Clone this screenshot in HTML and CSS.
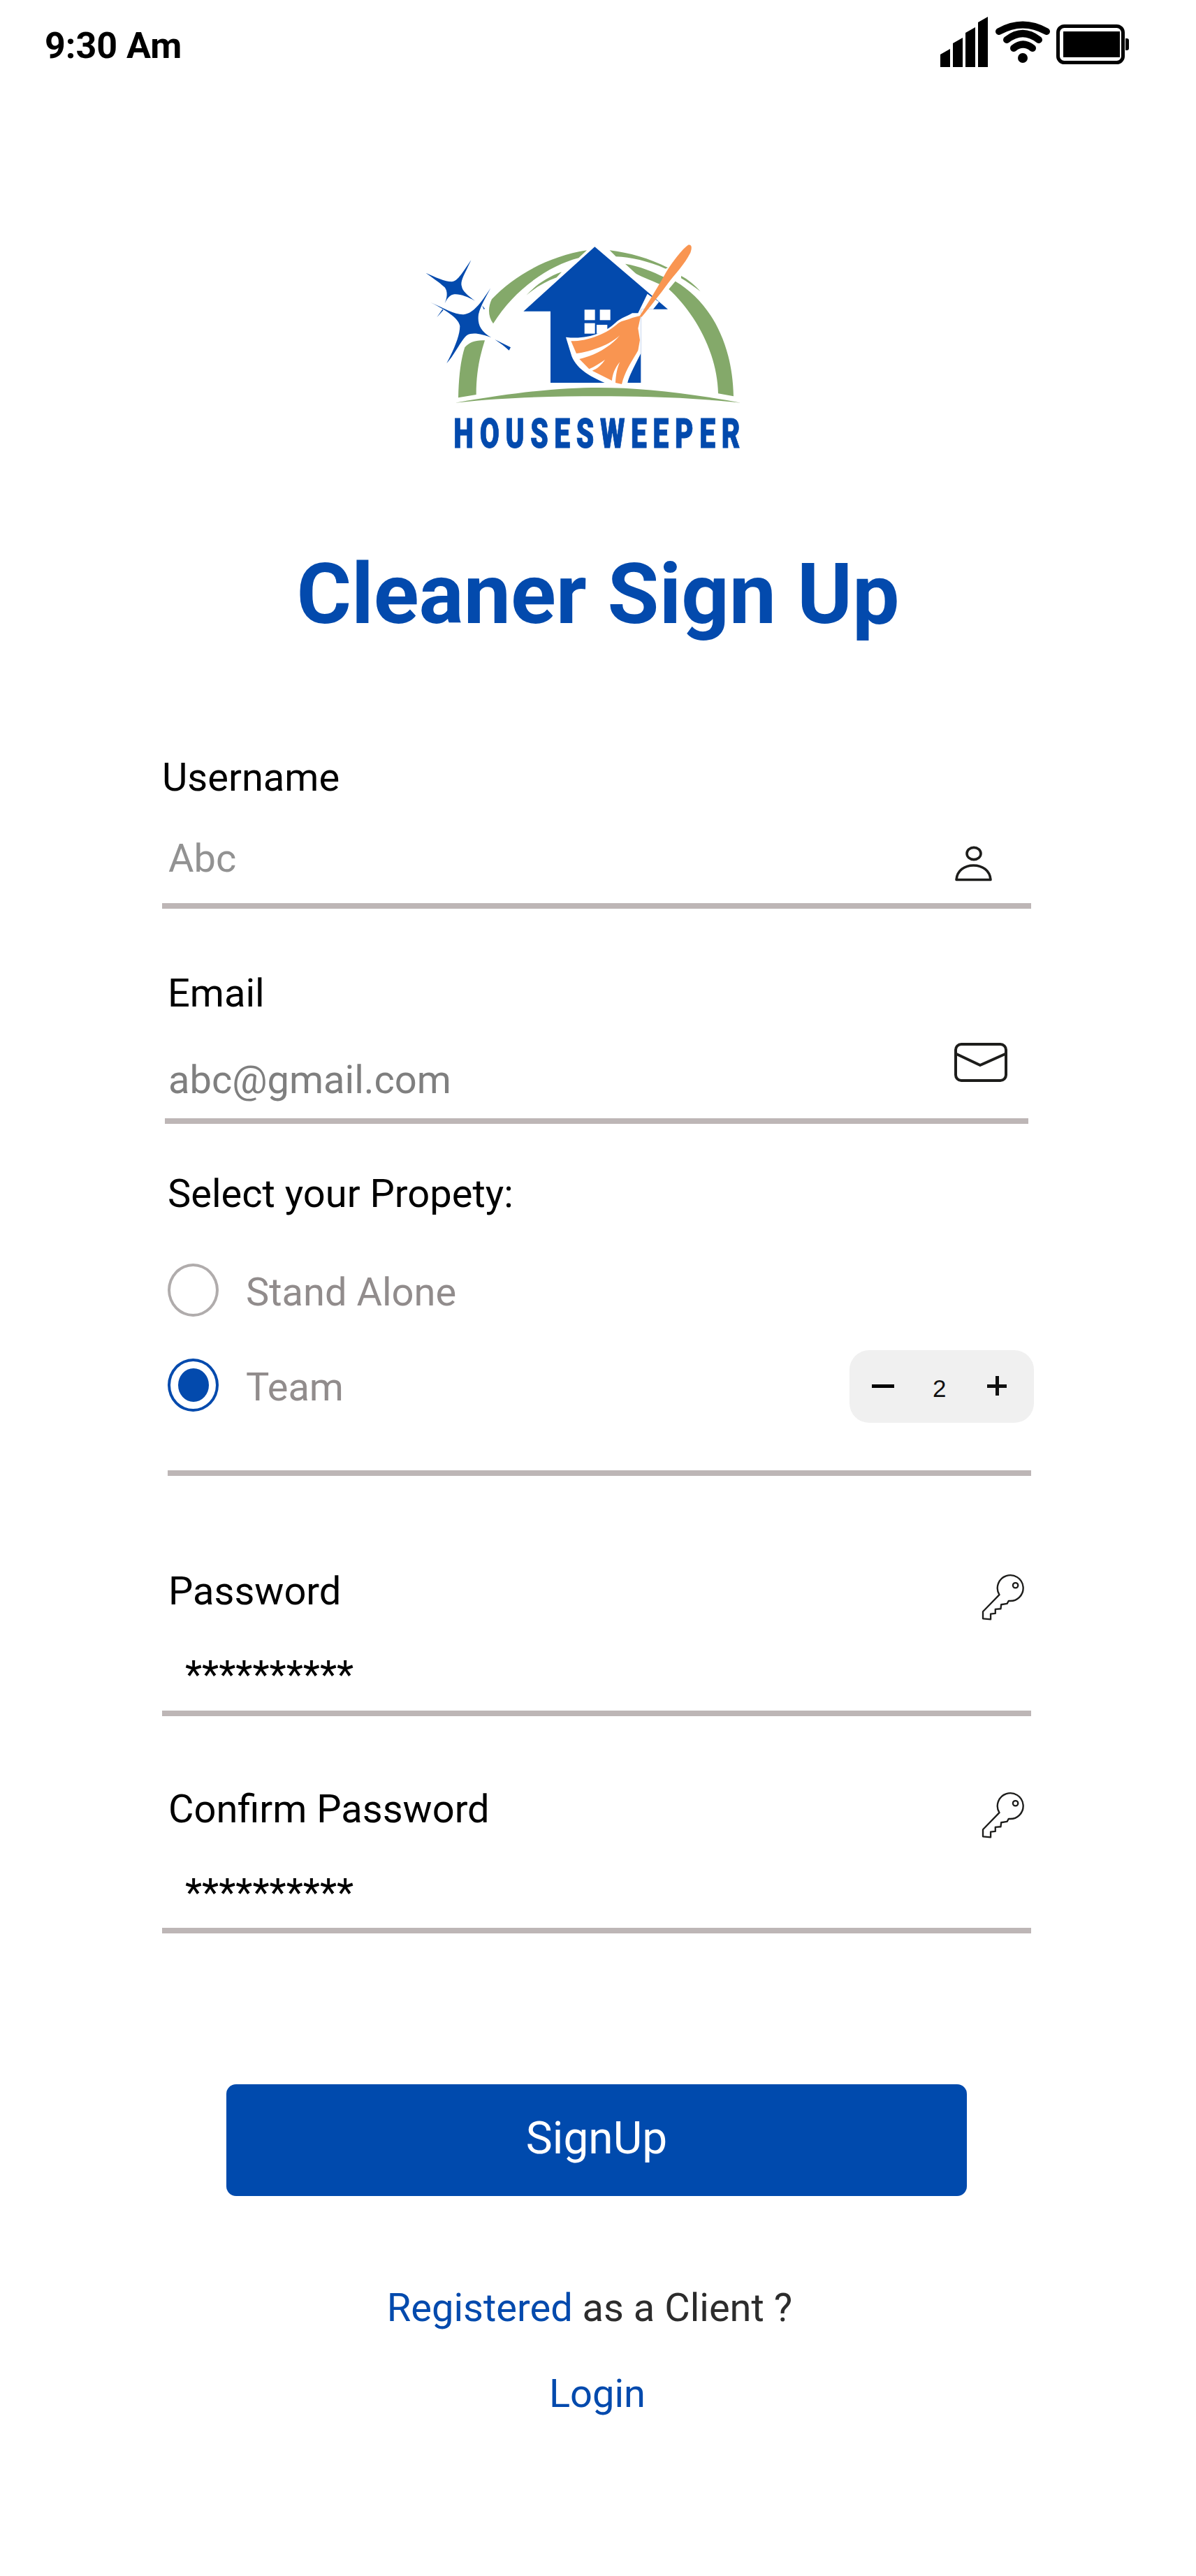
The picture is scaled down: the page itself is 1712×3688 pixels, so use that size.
FILE: index.html
```html
<!DOCTYPE html>
<html lang="en">
<head>
<meta charset="utf-8">
<title>Cleaner Sign Up</title>
<link rel="stylesheet" href="styles.css">
</head>
<body>
<div class="page">
  <header class="status">
    <span class="status-time">9:30 Am</span>
    <div class="status-icons">
      <svg class="ic-signal" viewBox="0 0 68 72"><path d="M0 72V54L14 46V72ZM18 72V38L32 30V72ZM36 72V23L50 15V72ZM54 72V8L68 0V72Z"/></svg>
      <svg class="ic-wifi" viewBox="0 0 80 72"><g fill="none" stroke="#000" stroke-width="10" stroke-linecap="round"><path d="M6 21Q40 2 74 21"/><path d="M17 33Q40 15 63 33"/><path d="M27 45Q40.5 34 54 45"/></g><circle cx="40" cy="59" r="7"/></svg>
      <svg class="ic-battery" viewBox="0 0 104 72"><rect x="2.5" y="13.5" width="93" height="52" rx="9" fill="none" stroke="#000" stroke-width="5"/><rect x="10" y="21" width="81" height="37"/><path d="M99 31h2a3 3 0 0 1 3 3v11a3 3 0 0 1-3 3h-2z"/></svg>
    </div>
  </header>

  <svg class="logo" viewBox="0 0 1560 1020">
    <g fill="#84A96A">
      <path d="M228 748C230 650 240 580 256 532C275 510 300 500 342 502C320 570 305 640 305 735Z"/>
      <path d="M372 325C470 220 620 140 780 115L745 148C620 180 470 280 378 430C355 400 355 360 372 325Z"/>
      <path d="M520 308C560 265 610 230 672 208L650 232C600 250 560 275 520 308Z"/>
      <path d="M878 115C960 125 1050 150 1128 190L1118 194C1040 160 970 145 905 142Z"/>
      <path d="M945 173C1010 185 1060 205 1115 232L1095 262C1050 240 1000 225 985 210Z"/>
      <path d="M1185 225C1215 240 1245 265 1268 292C1240 270 1210 250 1185 235Z"/>
      <path d="M1160 248C1300 330 1405 500 1410 742L1344 730C1340 550 1240 380 1132 282Z"/>
      <path d="M215 770C500 720 680 705 830 705C1000 705 1200 725 1440 770C1200 745 1000 742 830 742C650 742 450 745 215 770Z"/>
    </g>
    <g fill="#034AAD">
      <path d="M814 100L1128 368H1012V684H624V377H508Z"/>
      <path d="M283 157C260 210 235 245 243 270C245 290 270 310 300 332C260 310 215 295 195 310C180 320 175 335 170 342C185 310 180 280 165 270C150 255 120 235 88 212C130 230 170 250 200 250C225 250 250 205 283 157Z"/>
      <path d="M367 277C345 320 325 350 315 390C310 430 320 460 370 490C330 475 290 465 265 480C240 500 215 560 178 600C210 540 235 480 235 440C230 410 190 380 108 338C170 365 220 395 255 390C290 385 320 350 367 277Z"/>
      <path d="M385 498L453 532L446 545C430 530 410 515 385 498Z"/>
      <path d="M136 403L160 368L164 372Z"/>
      <path d="M330 352L342 366L338 369Z"/>
    </g>
    <g fill="#fff">
      <rect x="770" y="370" width="45" height="45"/>
      <rect x="836" y="370" width="45" height="45"/>
      <rect x="770" y="428" width="45" height="45"/>
      <rect x="822" y="435" width="46" height="38"/>
      <path d="M690 488C780 500 860 470 910 420C930 405 950 400 975 385L1000 385L1040 302L1090 337L1065 368H1012V558C980 620 960 660 955 684L870 690C800 660 740 630 715 570Z"/>
    </g>
    <g fill="#F99551">
      <path d="M1008 396C1050 330 1090 265 1120 210C1150 160 1190 110 1215 92C1232 88 1232 105 1225 125C1200 175 1160 215 1130 255C1090 310 1050 360 1015 402Z"/>
      <path d="M975 405L1012 395L1000 450L1008 500L1000 545C975 590 945 630 930 690L903 684C905 650 910 620 922 595C900 620 890 650 888 675L803 632C825 625 845 605 858 585C835 600 815 615 790 625L748 582C820 565 880 530 922 480C880 520 800 550 735 558L712 505C790 505 870 470 915 428C935 415 955 415 975 405Z"/>
    </g>
    <text class="logo-word" transform="translate(208 962) scale(.68 1)" textLength="1809">HOUSESWEEPER</text>
  </svg>

  <h1 class="title">Cleaner Sign Up</h1>

  <form class="form">
    <div class="field field-user">
      <div class="field-text">
        <div class="label">Username</div>
        <div class="value value-user">Abc</div>
      </div>
      <svg class="ic-user" viewBox="0 0 55 52"><g fill="none" stroke="#1d1d1b" stroke-width="3.6" stroke-linejoin="round"><ellipse cx="28" cy="12" rx="10" ry="8.6"/><path d="M3 49.5C4 36 15 29 27.500 29C40 29 51 36 52 49.500Z"/></g></svg>
    </div>

    <div class="field field-email">
      <div class="field-text">
        <div class="label label-email">Email</div>
        <div class="value value-email">abc@gmail.com</div>
      </div>
      <svg class="ic-mail" viewBox="0 0 80 60"><g fill="none" stroke="#1d1d1b" stroke-width="4" stroke-linejoin="round"><rect x="4" y="4" width="72" height="52" rx="8"/><path d="M3 17L39 34L77 17"/></g></svg>
    </div>

    <fieldset class="options">
      <div class="label">Select your Propety:</div>
      <div class="option option-first">
        <span class="radio"></span>
        <span class="option-text option-text-first">Stand Alone</span>
      </div>
      <div class="option option-second">
        <span class="radio radio-on"><span class="radio-dot"></span></span>
        <span class="option-text option-text-second">Team</span>
        <div class="stepper">
          <span class="step-minus"></span>
          <span class="step-count">2</span>
          <span class="step-plus"></span>
        </div>
      </div>
    </fieldset>

    <div class="field field-pass">
      <div class="field-text">
        <div class="label label-pass">Password</div>
        <div class="value value-pass">**********</div>
      </div>
      <svg class="ic-key" viewBox="70 100 200 200"><g fill="none" stroke="#1d1d1b" stroke-width="7" stroke-linejoin="round"><path d="M152 190L82 262V292L115 295V272L135 270V252L158 250L160 232L185 228L192 216A55 55 0 1 0 152 190Z"/><circle cx="221" cy="150" r="11"/></g></svg>
    </div>

    <div class="field field-confirm">
      <div class="field-text">
        <div class="label label-pass">Confirm Password</div>
        <div class="value value-pass">**********</div>
      </div>
      <svg class="ic-key" viewBox="70 100 200 200"><g fill="none" stroke="#1d1d1b" stroke-width="7" stroke-linejoin="round"><path d="M152 190L82 262V292L115 295V272L135 270V252L158 250L160 232L185 228L192 216A55 55 0 1 0 152 190Z"/><circle cx="221" cy="150" r="11"/></g></svg>
    </div>
  </form>

  <button class="submit" type="button">SignUp</button>

  <p class="register"><span class="link">Registered</span> as a Client ?</p>
  <p class="login"><span class="link">Login</span></p>
</div>
</body>
</html>
```

FILE: styles.css
```css
* { box-sizing: border-box; }
html, body { margin: 0; padding: 0; background: #fff; }
body { font-family: Roboto, "Liberation Sans", sans-serif; color: #000; }
.page { width: 1712px; height: 3688px; overflow: hidden; }

.status { height: 120px; display: flex; justify-content: space-between; padding: 24px 96px 0 64px; }
.status-time { font-size: 52px; font-weight: 700; line-height: 72px; height: 72px; margin-top: 6px; }
.status-icons { display: flex; height: 72px; }
.status-icons svg { display: block; height: 72px; }
.ic-signal { width: 68px; margin-right: 10px; }
.ic-wifi { width: 80px; margin-right: 8px; }
.ic-battery { width: 104px; }

.logo { display: block; width: 520px; height: 340px; margin: 200px 0 0 580px; }
.logo-word { font-family: Roboto, sans-serif; font-weight: 900; font-size: 180px; fill: #034AAD; stroke: #034AAD; stroke-width: 3px; }

.title { margin: 121px 0 0; text-align: center; color: #034AAD; font-size: 120px; line-height: 140px; font-weight: 700; }

.form { width: 1244px; margin: 160px 0 0 232px; }
.label { font-size: 56px; line-height: 64px; color: #000; }
.value { font-size: 56px; line-height: 64px; }

.field { display: flex; justify-content: space-between; align-items: flex-start; border-bottom: 8px solid #BDB6B6; }
.field-text { display: block; }

.field-user { padding-bottom: 31px; }
.value-user { margin: 52px 0 0 9px; color: #929292; }
.ic-user { width: 55px; height: 52px; margin: 129px 55px 0 0; flex: none; }

.field-email { margin: 89px 4px 0; padding: 0 0 23px 4px; }
.value-email { margin: 60px 0 0 1px; color: #7F7F7F; }
.ic-mail { width: 80px; height: 60px; margin: 101px 28px 0 0; flex: none; }

.options { margin: 68px 0 0 8px; padding: 0 0 68px; border: 0; border-bottom: 8px solid #BDB6B6; }
.option { display: flex; align-items: center; }
.option-first { margin-top: 68px; height: 76px; }
.option-second { margin-top: 48px; height: 104px; }
.radio { flex: none; width: 73px; height: 76px; border-radius: 50%; border: 4px solid #B0ACAC; display: flex; align-items: center; justify-content: center; }
.radio-on { border-color: #034AAD; margin-bottom: 4px; }
.radio-dot { width: 44px; height: 48px; border-radius: 50%; background: #034AAD; }
.option-text { font-size: 56px; line-height: 64px; color: #918C8C; margin-left: 39px; }
.option-text-first { margin-top: 5px; }
.option-text-second { margin-top: 1px; }

.stepper { margin-left: auto; width: 264px; height: 104px; border-radius: 28px; background: #F0F0F0; display: flex; align-items: center; padding-left: 32px; margin-right: -4px; }
.step-minus { width: 32px; height: 5px; background: #000; margin-top: -1px; }
.step-count { font-family: "Liberation Sans", Arial, sans-serif; font-size: 35px; line-height: 40px; color: #111; margin: 5px 0 0 55px; }
.step-plus { width: 28px; height: 28px; margin: -2px 0 0 59px; background: linear-gradient(#111, #111) center / 100% 5px no-repeat, linear-gradient(#111, #111) center / 5px 100% no-repeat; }

.label-pass { padding-left: 9px; }
.value-pass { padding-left: 33px; margin-top: 56px; }
.ic-key { width: 67px; height: 67px; margin: 7px 6px 0 0; flex: none; }
.field-pass { margin-top: 133px; padding-bottom: 19px; }
.field-confirm { margin-top: 101px; padding-bottom: 18px; }

.submit { display: block; width: 1060px; height: 160px; margin: 216px 0 0 324px; border: 0; border-radius: 14px; background: #004AAD; color: #fff; font-family: Roboto, sans-serif; font-size: 64px; line-height: 72px; padding: 0 0 4px; }

.register, .login { margin: 0; font-size: 56px; line-height: 64px; color: #2C2C2C; text-align: center; }
.register { margin-top: 128px; padding-right: 24px; }
.login { margin-top: 59px; padding-right: 2px; }
.link { color: #034AAD; }
```
